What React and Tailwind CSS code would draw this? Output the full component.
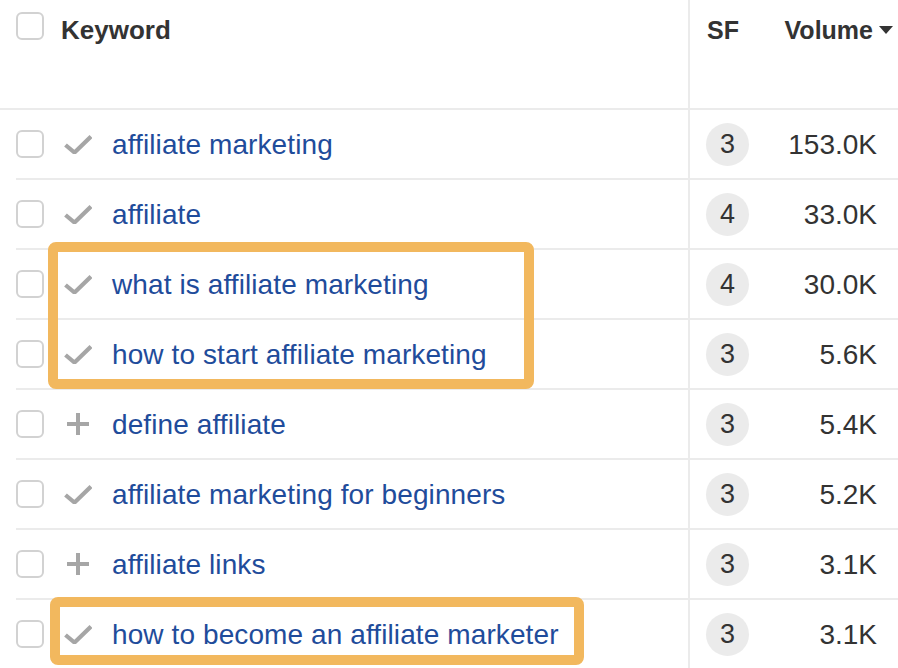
import React from 'react'

const rows = [
  { kw: 'affiliate marketing', icon: 'check', sf: 3, vol: '153.0K' },
  { kw: 'affiliate', icon: 'check', sf: 4, vol: '33.0K' },
  { kw: 'what is affiliate marketing', icon: 'check', sf: 4, vol: '30.0K' },
  { kw: 'how to start affiliate marketing', icon: 'check', sf: 3, vol: '5.6K' },
  { kw: 'define affiliate', icon: 'plus', sf: 3, vol: '5.4K' },
  { kw: 'affiliate marketing for beginners', icon: 'check', sf: 3, vol: '5.2K' },
  { kw: 'affiliate links', icon: 'plus', sf: 3, vol: '3.1K' },
  { kw: 'how to become an affiliate marketer', icon: 'check', sf: 3, vol: '3.1K' },
]

function Checkbox({ className = '' }) {
  return <div className={`h-[28px] w-[28px] shrink-0 rounded-[6px] border-2 border-[#d2d2d2] bg-white ${className}`} />
}

function CheckIcon() {
  return (
    <svg width="28" height="20" viewBox="0 0 28 20" className="shrink-0">
      <polyline points="1.5,11 10.5,18.5 27,2.5" fill="none" stroke="#a6a6a6" strokeWidth="4.2" />
    </svg>
  )
}

function PlusIcon() {
  return (
    <svg width="28" height="24" viewBox="0 0 28 24" className="shrink-0">
      <line x1="3" y1="12" x2="25" y2="12" stroke="#a6a6a6" strokeWidth="4" />
      <line x1="14" y1="1" x2="14" y2="23" stroke="#a6a6a6" strokeWidth="4" />
    </svg>
  )
}

export default function App() {
  return (
    <div className="relative h-[668px] w-[898px] overflow-hidden bg-white font-['Liberation_Sans',Arial,sans-serif]">
      {/* header */}
      <div className="flex h-[110px] border-b-2 border-[#ebebeb]">
        <div className="flex w-[688px] items-start pl-4">
          <Checkbox className="mt-3" />
          <span className="ml-[17px] pt-4 text-[26px] font-bold leading-[28px] text-[#333]">Keyword</span>
        </div>
        <div className="flex flex-1 border-l-2 border-[#ebebeb]">
          <div className="w-[80px] pl-[17px] pt-4 text-[25px] font-bold leading-[28px] text-[#333]">SF</div>
          <div className="flex flex-1 justify-end gap-[6px] pr-[5px] pt-4">
            <span className="text-[25px] font-bold leading-[28px] text-[#333]">Volume</span>
            <span className="flex h-[28px] items-center">
              <svg width="14" height="8" viewBox="0 0 14 8">
                <polygon points="0,0 14,0 7,8" fill="#333" />
              </svg>
            </span>
          </div>
        </div>
      </div>

      {/* rows */}
      <div className="pl-4">
        {rows.map((r, i) => (
          <div key={i} className="flex h-[70px] border-b-2 border-[#ebebeb]">
            <div className="flex w-[672px] items-center">
              <Checkbox />
              <div className="ml-[20px] flex w-[28px] justify-center">
                {r.icon === 'check' ? <CheckIcon /> : <PlusIcon />}
              </div>
              <span className="ml-5 mt-[2px] whitespace-nowrap text-[28px] leading-[32px] tracking-[0.1px] text-[#1f4c9b]">{r.kw}</span>
            </div>
            <div className="flex flex-1 items-center border-l-2 border-[#ebebeb]">
              <div className="w-[80px] pl-[16px]">
                <div className="flex h-[43px] w-[43px] items-center justify-center rounded-full bg-[#ebebeb] text-[27px] leading-none text-[#333]">
                  {r.sf}
                </div>
              </div>
              <div className="mt-[2px] flex-1 pr-[21px] text-right text-[28px] leading-[32px] text-[#333]">{r.vol}</div>
            </div>
          </div>
        ))}
      </div>

      {/* highlight boxes */}
      <div className="absolute left-[48px] top-[242px] h-[147px] w-[486px] rounded-[8px] border-[10px] border-[#f2b85e]" />
      <div className="absolute left-[50px] top-[597px] h-[68px] w-[534px] rounded-[8px] border-[10px] border-[#f2b85e]" />
    </div>
  )
}
